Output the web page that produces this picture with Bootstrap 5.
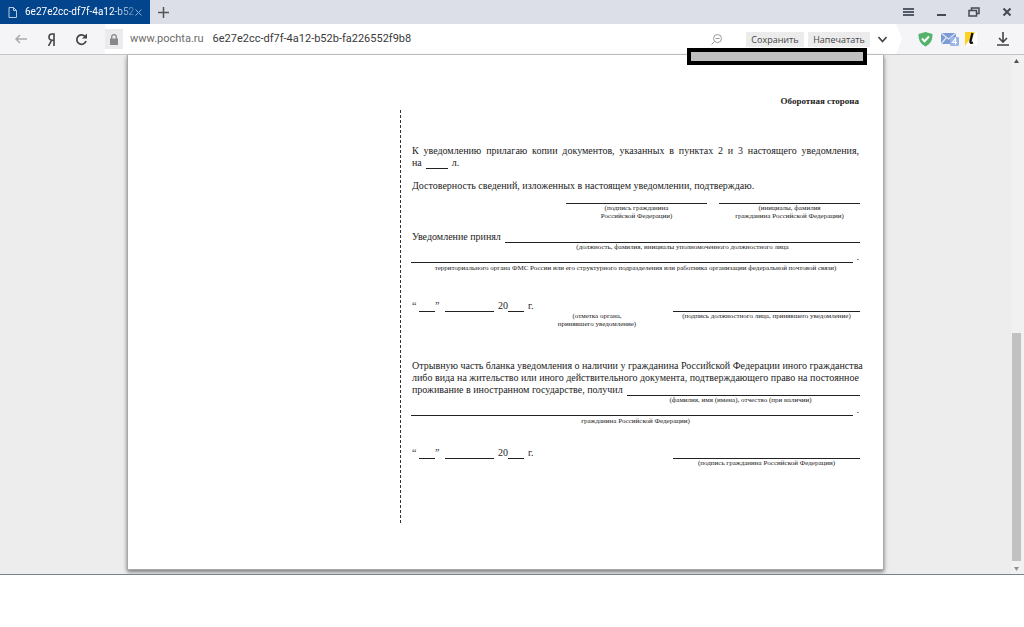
<!DOCTYPE html>
<html lang="ru">
<head>
<meta charset="utf-8">
<meta name="viewport" content="width=device-width, initial-scale=1">
<title>6e27e2cc-df7f-4a12-b52b-fa226552f9b8</title>
<link href="https://cdn.jsdelivr.net/npm/bootstrap@5.3.0/dist/css/bootstrap.min.css" rel="stylesheet">
<style>
  body { background: #fff; font-family: "Open Sans", "Noto Sans", sans-serif; font-size: 11px; line-height: 16px; }
  button { border: 0; background: none; padding: 0; line-height: 0; }
  svg { display: block; }

  .tab-strip { background: #dcdee8; height: 24px; }
  .tab-item { background: #03458c; width: 150px; padding: 0 8px; height: 24px; }
  .tab-title { font-family: Roboto, sans-serif; font-size: 10px; color: #fff; text-decoration: none; white-space: nowrap; line-height: 24px;
    -webkit-mask-image: linear-gradient(90deg, #000 80%, rgba(0,0,0,.3)); mask-image: linear-gradient(90deg, #000 80%, rgba(0,0,0,.3)); }
  .window-tools { gap: 21px; padding-right: 11px; }

  .tool-bar { background: #f5f5f7; height: 31px; border-bottom: 1px solid #c4c4c6; padding-right: 15px; }
  .nav-tools { width: 105px; padding: 0 17px 0 15px; }
  .omnibox { background: #fff; clip-path: polygon(0 0, calc(100% - 6px) 0, 100% 50%, calc(100% - 6px) 100%, 0 100%); padding-right: 15px; }
  .lock-btn { background: #ebebed; width: 18px; height: 20px; }
  .host-link { color: #6c6c6c; text-decoration: none; margin: 0 9px 0 7px; }
  .address { border: 0; outline: 0; background: none; padding: 0; color: #3a3a3a; min-width: 0; }
  .host-link, .address { font-family: Roboto, sans-serif; font-size: 11px; }
  .page-btn { background: #ececec; color: #444; font-size: 9px; line-height: 15px; height: 15px; width: 58px; }
  .page-btn.wide { width: 62px; }
  .extensions { gap: 4px; padding-left: 16px; }

  .viewer { background: #ededed; border-bottom: 1px solid #77828f; }
  .scroll-track { width: 13px; background: #f1f1f1; padding: 4px 2px 3px 0; }
  .scroll-thumb { background: #c1c1c1; width: 9px; height: 228px; margin-bottom: 6px; }
  .sheet { background: #fff; max-width: 757px; margin-bottom: 4px; padding: 40px 24px 46px 0; color: #1b1b1b;
    border: solid #a9a9a9; border-width: 0 1px 1px; box-shadow: 0 2px 4px #777;
    font-family: "Liberation Serif", "Times New Roman", serif; font-size: 10px; line-height: 12px; }
  .redacted { right: 16px; top: -7px; width: 180px; height: 17px; border: 4px solid #000; background: #c0c0c0; z-index: 2; }
  .side-title { margin-bottom: 3px; font-size: 9px; line-height: 12px; font-weight: 700; text-align: right; }
  .stub { width: 272px; flex: none; }
  .stub-form { min-width: 0; min-height: 413px; padding: 35px 0 0 12px;
    background: repeating-linear-gradient(#333 0 3px, transparent 3px 5px) left top / 1px 100% no-repeat; }
  .spread { text-align: justify; text-align-last: justify; white-space: nowrap; }
  .rule { border-bottom: 1px solid #222; }
  .note { font-size: 7px; line-height: 8px; text-align: center; }
  .bleed-start { margin-left: -1px; }
  .bleed-end { margin-right: -1px; }
  .gap-s { margin-top: 11px; }
  .gap-m { margin-top: 22px; }
  .gap-l { margin-top: 28px; }
  .gap-xl { margin-top: 32px; }
  .sign-l { width: 141px; }
  .sign-w { width: 187px; }
  .stamp { width: 120px; margin-right: 16px; }
  .blank-s { width: 16px; height: 12px; }
  .blank-m { width: 22px; height: 12px; }
  .blank-l { width: 49px; height: 12px; }
  .quote-open { width: 7px; }
  .quote-close { width: 10px; }
  .line-row { height: 12px; margin-bottom: 1px; }
  .for-fields { padding-left: 94px; }
  .for-name { padding-left: 210px; }
</style>
</head>
<body>
<header>
  <div class="tab-strip d-flex align-items-center">
    <div class="tab-item d-flex align-items-center">
      <svg class="flex-shrink-0 me-2" width="9" height="11" viewBox="0 0 9 11" fill="none" stroke="#b9cbe0"><path d="M1 .5h4.500L8.500 3.500v7H1zM5.500.5v3h3"/></svg>
      <a class="tab-title" href="#sheet">6e27e2cc-df7f-4a12-b52</a>
      <button class="ms-auto" aria-label="Закрыть вкладку"><svg width="7" height="7" viewBox="0 0 7 7" stroke="#8fb0d6"><path d="M.5.5l6 6M6.500.5l-6 6"/></svg></button>
    </div>
    <button class="ms-2" aria-label="Новая вкладка"><svg width="11" height="11" viewBox="0 0 11 11" stroke="#555" stroke-width="1.500"><path d="M5.500 0v11M0 5.500h11"/></svg></button>
    <div class="window-tools d-flex align-items-center ms-auto">
      <button aria-label="Меню"><svg width="12" height="12" viewBox="0 0 12 12" stroke="#555b66" stroke-width="2"><path d="M1 3h11M1 6h11M1 9h11"/></svg></button>
      <button aria-label="Свернуть"><svg width="12" height="12" viewBox="0 0 12 12" stroke="#444a54" stroke-width="2"><path d="M2 9h9"/></svg></button>
      <button aria-label="Восстановить"><svg width="12" height="12" viewBox="0 0 12 12" fill="none" stroke="#444a54" stroke-width="1.500"><path d="M1 4.500h7.500V10H1zM3.500 4.500V2H11v5.500H8.500"/></svg></button>
      <button aria-label="Закрыть"><svg width="12" height="12" viewBox="0 0 12 12" stroke="#444a54" stroke-width="2"><path d="M2.500 2.500l7 7M9.500 2.500l-7 7"/></svg></button>
    </div>
  </div>
  <div class="tool-bar d-flex">
    <nav class="nav-tools d-flex align-items-center justify-content-between flex-shrink-0">
      <button aria-label="Назад"><svg width="13" height="12" viewBox="0 0 13 12" fill="none" stroke="#aaa" stroke-width="1.500"><path d="M12 6H1M5 2L1 6l4 4"/></svg></button>
      <button aria-label="Яндекс"><svg width="9" height="13" viewBox="0 0 9 13" fill="none" stroke="#444" stroke-width="1.600"><path d="M7 13V1H5C1 1 1 7.300 5 7.300h2M4.500 7.300L1.500 13"/></svg></button>
      <button aria-label="Обновить"><svg width="13" height="13" viewBox="0 0 13 13"><path d="M10 3.500A4.700 4.700 0 1 0 11 8" fill="none" stroke="#444" stroke-width="1.800"/><path d="M7 5.500h5V.5z" fill="#444"/></svg></button>
    </nav>
    <div class="omnibox d-flex align-items-center flex-grow-1">
      <button class="lock-btn d-flex align-items-center justify-content-center" aria-label="Защищённое соединение"><svg width="8" height="11" viewBox="0 0 8 11"><path d="M0 4.500h8V11H0z" fill="#888"/><path d="M1.700 5V3a2.300 2.300 0 0 1 4.600 0v2" fill="none" stroke="#888" stroke-width="1.300"/></svg></button>
      <a class="host-link" href="#sheet">www.pochta.ru</a>
      <input class="address flex-grow-1" aria-label="Адрес страницы" value="6e27e2cc-df7f-4a12-b52b-fa226552f9b8">
      <button aria-label="Масштаб" class="me-4"><svg width="11" height="11" viewBox="0 0 11 11" fill="none" stroke="#999"><circle cx="6.500" cy="4.500" r="4"/><path d="M4.500 4.500h4M3.500 7.500L.5 10.500"/></svg></button>
      <button class="page-btn">Сохранить</button>
      <button class="page-btn wide ms-1 me-2">Напечатать</button>
      <button aria-label="Другие действия"><svg width="9" height="7" viewBox="0 0 9 7" fill="none" stroke="#444" stroke-width="1.600"><path d="M.5 1l4 4.500L8.500 1"/></svg></button>
    </div>
    <div class="extensions d-flex align-items-center">
      <button class="me-1" aria-label="Защита"><svg width="15" height="16" viewBox="0 0 15 16"><path d="M7.500 1L14.500 3c0 6-1.500 9.500-7 12.500C2 12.500.5 9 .5 3z" fill="#54b36b"/><path d="M4 7.500l2.500 2.800L11 5.500" fill="none" stroke="#fff" stroke-width="2"/></svg></button>
      <button aria-label="Почта, 4 письма"><svg width="19" height="14" viewBox="0 0 19 14"><path d="M0 1h15v11H0z" fill="#7d9bd2"/><path d="M0 1l7.500 6L15 1M0 12l5-6" fill="none" stroke="#dfe8f8" stroke-width="1.200"/><rect x="9" y="5" width="9" height="9" rx="1" fill="#9db4e6"/><path d="M14.500 12.500v-6l-3 4h4.500" fill="none" stroke="#fff" stroke-width="1.200"/></svg></button>
      <button aria-label="Литрес"><svg width="13" height="14" viewBox="0 0 13 14"><path d="M1 0h12v14H1z" fill="#fff"/><path d="M1 0h10L1 14z" fill="#ffd21f"/><path d="M8.500 1L6.500 9c-.4 1.700.5 2.300 2.500 1.500" fill="none" stroke="#111" stroke-width="2.400"/></svg></button>
      <button class="ms-3" aria-label="Загрузки"><svg width="12" height="14" viewBox="0 0 12 14" fill="none" stroke="#444" stroke-width="1.600"><path d="M6 0v9.500M2 6l4 4 4-4M0 13h12"/></svg></button>
    </div>
  </div>
</header>

<main class="viewer d-flex">
  <div class="flex-grow-1">
    <article class="sheet mx-auto position-relative" id="sheet">
      <div class="redacted position-absolute"></div>
      <h1 class="side-title">Оборотная сторона</h1>
      <div class="d-flex">
        <div class="stub"></div>
        <section class="stub-form flex-grow-1">
          <div class="spread">К уведомлению прилагаю копии документов, указанных в пунктах 2 и 3 настоящего уведомления,</div>
          <div class="d-flex"><span>на</span><span class="rule blank-m ms-1 me-1"></span><span>л.</span></div>
          <div class="gap-s">Достоверность сведений, изложенных в настоящем уведомлении, подтверждаю.</div>
          <div class="bleed-end gap-s d-flex justify-content-end">
            <div class="sign-l rule me-2"></div><div class="sign-l rule ms-1"></div>
          </div>
          <div class="bleed-end d-flex justify-content-end note">
            <div class="sign-l me-2">(подпись гражданина<br>Российской Федерации)</div>
            <div class="sign-l ms-1">(инициалы, фамилия<br>гражданина Российской Федерации)</div>
          </div>
          <div class="gap-s bleed-end d-flex"><span class="me-1">Уведомление принял</span><span class="rule flex-grow-1"></span></div>
          <div class="note for-fields">(должность, фамилия, инициалы уполномоченного должностного лица</div>
          <div class="line-row bleed-start d-flex"><span class="rule flex-grow-1 me-1"></span><span>.</span></div>
          <div class="note">территориального органа ФМС России или его структурного подразделения или работника организации федеральной почтовой связи)</div>

          <div class="gap-l bleed-end d-flex">
            <span class="quote-open">“</span><span class="rule blank-s"></span><span class="quote-close">”</span><span class="rule blank-l me-1"></span><span>20</span><span class="rule blank-s me-1"></span><span>г.</span>
            <span class="rule sign-w ms-auto"></span>
          </div>
          <div class="bleed-end d-flex justify-content-end note">
            <div class="stamp">(отметка органа,<br>принявшего уведомление)</div>
            <div class="sign-w">(подпись должностного лица, принявшего уведомление)</div>
          </div>

          <div class="gap-xl">
            <div class="spread">Отрывную часть бланка уведомления о наличии у гражданина Российской Федерации иного гражданства</div>
            <div class="spread">либо вида на жительство или иного действительного документа, подтверждающего право на постоянное</div>
            <div class="bleed-end d-flex"><span class="me-1">проживание в иностранном государстве, получил</span><span class="rule flex-grow-1"></span></div>
          </div>
          <div class="note for-name">(фамилия, имя (имена), отчество (при наличии)</div>
          <div class="line-row bleed-start d-flex"><span class="rule flex-grow-1 me-1"></span><span>.</span></div>
          <div class="note">гражданина Российской Федерации)</div>

          <div class="gap-m bleed-end d-flex">
            <span class="quote-open">“</span><span class="rule blank-s"></span><span class="quote-close">”</span><span class="rule blank-l me-1"></span><span>20</span><span class="rule blank-s me-1"></span><span>г.</span>
            <span class="rule sign-w ms-auto"></span>
          </div>
          <div class="bleed-end d-flex justify-content-end note">
            <div class="sign-w">(подпись гражданина Российской Федерации)</div>
          </div>
        </section>
      </div>
    </article>
  </div>
  <div class="scroll-track d-flex flex-column align-items-center justify-content-between">
    <button aria-label="Вверх"><svg width="5" height="4" viewBox="0 0 5 4"><path d="M2.500 0L5 4H0z" fill="#505050"/></svg></button>
    <div class="scroll-thumb mt-auto"></div>
    <button aria-label="Вниз"><svg width="5" height="4" viewBox="0 0 5 4"><path d="M2.500 4L5 0H0z" fill="#909090"/></svg></button>
  </div>
</main>
<script src="https://cdn.jsdelivr.net/npm/bootstrap@5.3.0/dist/js/bootstrap.bundle.min.js"></script>
</body>
</html>
